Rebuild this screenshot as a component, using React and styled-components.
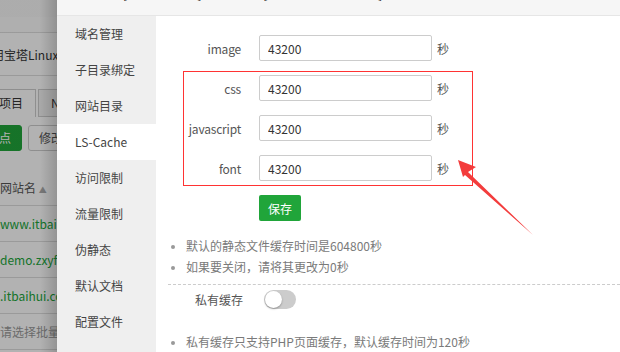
import React from 'react';
import styled, { createGlobalStyle } from 'styled-components';

const GlobalStyle = createGlobalStyle`
    * { box-sizing: border-box; }
    body {
        margin: 0;
        background: #fff;
        font-family: "Noto Sans CJK SC", "Noto Sans", sans-serif;
        font-size: 12px;
        overflow: hidden;
    }
`

const menu = ['域名管理', '子目录绑定', '网站目录', 'LS-Cache', '访问限制', '流量限制', '伪静态', '默认文档', '配置文件']

const rows = [
    { label: 'image', value: '43200' },
    { label: 'css', value: '43200' },
    { label: 'javascript', value: '43200' },
    { label: 'font', value: '43200' },
]

export default function App() {
    return (
        <>
            <GlobalStyle />
            <Screen>
                <BackPage>
                    <BackTopBar />
                    <BackStripe />
                    <BackNotice>用宝塔Linux面板</BackNotice>
                    <BackTabs>
                        <BackTab $active>项目</BackTab>
                        <BackTab>Ne</BackTab>
                    </BackTabs>
                    <BackButtons>
                        <BackButton $green>点</BackButton>
                        <BackButton>修改</BackButton>
                    </BackButtons>
                    <BackHead>网站名 <Caret>▲</Caret></BackHead>
                    <BackRow $link>www.itbaihui.com</BackRow>
                    <BackRow $link>demo.zxyfan.com</BackRow>
                    <BackRow $link>.itbaihui.com</BackRow>
                    <BackRow>请选择批量操作</BackRow>
                    <Shade />
                </BackPage>
                <Modal>
                    <ModalTitle>站点修改[itbaihui.com] -- 添加时间[2021-05-06 14:17:26]</ModalTitle>
                    <ModalBody>
                        <SideMenu>
                            {menu.map((item) => (
                                <MenuItem key={item} $active={item === 'LS-Cache'}>{item}</MenuItem>
                            ))}
                        </SideMenu>
                        <Content>
                            <Form>
                                {rows.map((row) => (
                                    <FormRow key={row.label}>
                                        <Label>{row.label}</Label>
                                        <Input defaultValue={row.value} />
                                        <Unit>秒</Unit>
                                    </FormRow>
                                ))}
                                <FormRow>
                                    <span />
                                    <SaveButton>保存</SaveButton>
                                </FormRow>
                                <Highlight />
                                <Arrow width="90" height="90" viewBox="0 0 90 90">
                                    <polygon points="3,4 8,21 10,19 78,79 13,16 21,11" fill="#f33c3c" />
                                </Arrow>
                            </Form>
                            <Tips>
                                <li>默认的静态文件缓存时间是604800秒</li>
                                <li>如果要关闭，请将其更改为0秒</li>
                            </Tips>
                            <Divider />
                            <SwitchRow>
                                <SwitchLabel>私有缓存</SwitchLabel>
                                <Switch><Knob /></Switch>
                            </SwitchRow>
                            <Tips $top={22}>
                                <li>私有缓存只支持PHP页面缓存，默认缓存时间为120秒</li>
                            </Tips>
                        </Content>
                    </ModalBody>
                </Modal>
            </Screen>
        </>
    )
}

const Screen = styled.div`
    display: flex;
    width: 620px;
    height: 352px;
    overflow: hidden;
`
const BackPage = styled.div`
    position: relative;
    width: 57px;
    flex-shrink: 0;
    background: #fff;
    overflow: hidden;
    white-space: nowrap;
    color: #333;
`
const BackTopBar = styled.div`
    height: 17px;
    background: #f7f7f7;
`
const BackStripe = styled.div`
    height: 13px;
    background: #e8e8e8;
    border-bottom: 15px solid #fafafa;
`
const BackNotice = styled.div`
    height: 44px;
    line-height: 44px;
    margin-left: -8px;
    font-size: 12px;
    color: #333;
    overflow: hidden;
    border-top: 1px solid #ddd;
    border-bottom: 1px solid #ddd;
`
const BackTabs = styled.div`
    display: flex;
    gap: 2px;
    margin: 13px 0 0 -14px;
    overflow: hidden;
`
const BackTab = styled.div`
    flex-shrink: 0;
    height: 28px;
    line-height: 26px;
    padding: 0 12px;
    border: 1px solid #ccc;
    border-bottom: ${p => p.$active ? 'none' : '1px solid #ccc'};
    background: ${p => p.$active ? '#fff' : '#f2f2f2'};
    font-size: 12px;
`
const BackButtons = styled.div`
    display: flex;
    gap: 6px;
    margin: 8px 0 0 -12px;
    overflow: hidden;
`
const BackButton = styled.div`
    flex-shrink: 0;
    height: 26px;
    line-height: 24px;
    padding: 0 10px;
    border-radius: 3px;
    border: 1px solid ${p => p.$green ? '#20a53a' : '#ccc'};
    background: ${p => p.$green ? '#20a53a' : '#fff'};
    color: ${p => p.$green ? '#fff' : '#555'};
    font-size: 12px;
`
const BackHead = styled.div`
    height: 36px;
    line-height: 36px;
    margin-top: 19px;
    font-size: 12px;
    color: #555;
    overflow: hidden;
    border-bottom: 1px solid #ddd;
`
const Caret = styled.span`
    font-size: 8px;
    color: #aaa;
`
const BackRow = styled.div`
    height: 36px;
    line-height: 36px;
    font-size: 12px;
    color: ${p => p.$link ? '#20a53a' : '#999'};
    overflow: hidden;
    border-bottom: 1px solid #ddd;
`
const Shade = styled.div`
    position: absolute;
    inset: 0;
    background: linear-gradient(to right, rgba(0,0,0,0.3) 70%, rgba(0,0,0,0.42));
`
const Modal = styled.div`
    flex: 1;
    margin-top: -27px;
    background: #fff;
    display: flex;
    flex-direction: column;
`
const ModalTitle = styled.div`
    height: 43px;
    line-height: 42px;
    padding-left: 18px;
    background: #f6f6f6;
    border-bottom: 1px solid #e6e6e6;
    color: #333;
    font-size: 12px;
    white-space: nowrap;
    overflow: hidden;
`
const ModalBody = styled.div`
    flex: 1;
    display: flex;
`
const SideMenu = styled.div`
    width: 99px;
    flex-shrink: 0;
    background: #efefef;
`
const MenuItem = styled.div`
    height: 36px;
    line-height: 36px;
    padding-left: 18px;
    font-size: 12px;
    color: #444;
    background: ${p => p.$active ? '#fff' : 'transparent'};
`
const Content = styled.div`
    flex: 1;
    padding: 19px 0 0 12px;
`
const Form = styled.div`
    position: relative;
    display: flex;
    flex-direction: column;
    gap: 14px;
`
const FormRow = styled.div`
    display: grid;
    grid-template-columns: 73px 173px auto;
    column-gap: 18px;
    align-items: center;
    & > :nth-child(3) { margin-left: -13px; }
`
const Label = styled.label`
    text-align: right;
    font-size: 12px;
    letter-spacing: -0.2px;
    color: #555;
`
const Input = styled.input`
    height: 26px;
    width: 173px;
    border: 1px solid #ccc;
    border-radius: 2px;
    padding: 0 8px;
    font-family: "Noto Sans CJK SC", "Noto Sans", sans-serif;
    font-size: 12px;
    color: #333;
    outline: none;
`
const Unit = styled.span`
    font-size: 12px;
    color: #555;
`
const SaveButton = styled.button`
    width: 42px;
    height: 26px;
    border: none;
    border-radius: 2px;
    background: #20a53a;
    color: #fff;
    font-family: "Noto Sans CJK SC", "Noto Sans", sans-serif;
    font-size: 12px;
    padding: 0;
`
const Highlight = styled.div`
    position: absolute;
    left: 15px;
    top: 36px;
    width: 290px;
    height: 115px;
    border: 1px solid #f33;
    pointer-events: none;
`
const Arrow = styled.svg`
    position: absolute;
    left: 287px;
    top: 121px;
    pointer-events: none;
`
const Tips = styled.ul`
    margin: ${p => p.$top || 14}px 0 0;
    padding: 0 0 0 18px;
    list-style: disc;
    color: #7a7a7a;
    font-size: 12px;
    li {
        height: 21px;
        line-height: 21px;
    }
    li::marker { color: #999; font-size: 10px; }
`
const Divider = styled.div`
    margin-top: 7px;
    border-top: 1px dashed #ccc;
`
const SwitchRow = styled.div`
    display: flex;
    align-items: center;
    gap: 21px;
    padding: 5px 0 0 27px;
`
const SwitchLabel = styled.span`
    font-size: 12px;
    color: #555;
`
const Switch = styled.div`
    width: 32px;
    height: 19px;
    border-radius: 10px;
    background: #ccc;
    padding: 1px;
`
const Knob = styled.div`
    width: 17px;
    height: 17px;
    border-radius: 50%;
    background: #fff;
    box-shadow: 0 1px 2px rgba(0,0,0,0.3);
`
